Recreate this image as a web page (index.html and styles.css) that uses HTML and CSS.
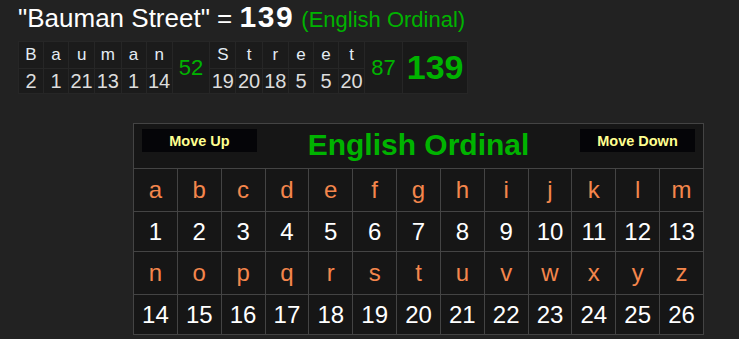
FILE: index.html
```html
<!DOCTYPE html>
<html>
<head>
<meta charset="utf-8">
<link rel="stylesheet" href="styles.css">
</head>
<body>
<div class="page">
  <div class="title">"Bauman Street" = <b class="total">139</b> <span class="cipher-name">(English Ordinal)</span></div>
  <table class="breakdown">
    <tr class="letters">
      <td>B</td><td>a</td><td>u</td><td>m</td><td>a</td><td>n</td>
      <td class="word-sum" rowspan="2">52</td>
      <td>S</td><td>t</td><td>r</td><td>e</td><td>e</td><td>t</td>
      <td class="word-sum" rowspan="2">87</td>
      <td class="grand" rowspan="2">139</td>
    </tr>
    <tr class="nums">
      <td>2</td><td>1</td><td>21</td><td>13</td><td>1</td><td>14</td>
      <td>19</td><td>20</td><td>18</td><td>5</td><td>5</td><td>20</td>
    </tr>
  </table>
  <table class="cipher">
    <tr>
      <th colspan="13" class="head">
        <div class="head-row">
          <button class="move">Move Up</button>
          <span class="cipher-title">English Ordinal</span>
          <button class="move">Move Down</button>
        </div>
      </th>
    </tr>
    <tr class="lrow"><td>a</td><td>b</td><td>c</td><td>d</td><td>e</td><td>f</td><td>g</td><td>h</td><td>i</td><td>j</td><td>k</td><td>l</td><td>m</td></tr>
    <tr class="nrow"><td>1</td><td>2</td><td>3</td><td>4</td><td>5</td><td>6</td><td>7</td><td>8</td><td>9</td><td>10</td><td>11</td><td>12</td><td>13</td></tr>
    <tr class="lrow"><td>n</td><td>o</td><td>p</td><td>q</td><td>r</td><td>s</td><td>t</td><td>u</td><td>v</td><td>w</td><td>x</td><td>y</td><td>z</td></tr>
    <tr class="nrow"><td>14</td><td>15</td><td>16</td><td>17</td><td>18</td><td>19</td><td>20</td><td>21</td><td>22</td><td>23</td><td>24</td><td>25</td><td>26</td></tr>
  </table>
</div>
</body>
</html>
```

FILE: styles.css
```css
html, body {
  margin: 0;
  padding: 0;
  background: #222222;
  font-family: "Liberation Sans", Arial, sans-serif;
}
.page {
  padding: 2px 0 0 18px;
}
.title {
  color: #ffffff;
  font-size: 26px;
  line-height: 30px;
  white-space: nowrap;
}
.total {
  font-size: 30px;
  line-height: 30px;
  letter-spacing: 1.5px;
  font-weight: bold;
}
.cipher-name {
  color: #00b300;
  font-size: 22px;
}
.breakdown {
  margin-top: 6px;
  border-collapse: collapse;
  background: #1b1b1b;
}
.breakdown td {
  border: 1px solid #262626;
  text-align: center;
  padding: 0 1.5px;
  min-width: 21px;
  color: #dddddd;
  font-size: 20px;
}
.breakdown .letters td {
  height: 26px;
  color: #e4ecf4;
  font-size: 17px;
}
.breakdown .nums td {
  height: 24px;
}
.breakdown .letters td.word-sum {
  color: #00b300;
  font-size: 22px;
  padding: 0 6px;
}
.breakdown .letters td.grand {
  color: #00b300;
  font-size: 34px;
  font-weight: bold;
  background: #191919;
  padding: 0 4px;
}
.cipher {
  margin: 29px 0 0 115px;
  width: 571px;
  table-layout: fixed;
  border-collapse: collapse;
  background: #161616;
  border: 1px solid #444444;
}
.cipher td {
  border: 1px solid #444444;
  padding: 0;
  text-align: center;
  font-size: 24px;
}
.head {
  height: 44px;
  padding: 0;
  vertical-align: top;
}
.head-row {
  display: flex;
  justify-content: space-between;
  align-items: flex-start;
  padding: 5px 8px 0 8px;
}
.move {
  width: 115px;
  height: 23px;
  background: #050508;
  border: 0;
  color: #ffff90;
  font-family: "Liberation Sans", Arial, sans-serif;
  font-weight: bold;
  font-size: 14.5px;
  padding: 0;
}
.cipher-title {
  color: #00b300;
  font-size: 30px;
  font-weight: bold;
  line-height: 34px;
  margin-top: -1px;
}
.lrow td {
  height: 42px;
  color: #f4864c;
}
.nrow td {
  height: 39px;
  color: #ffffff;
}
```
